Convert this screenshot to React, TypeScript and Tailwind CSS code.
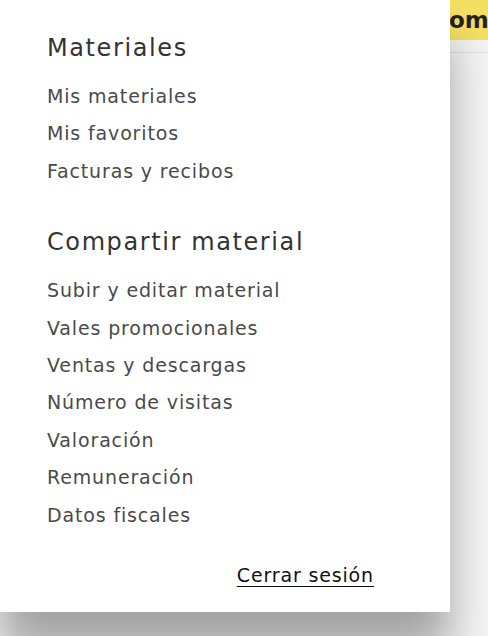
import React from "react";

const font = { fontFamily: '"DejaVu Sans", "Liberation Sans", sans-serif' };

type Section = {
  title: string;
  items: string[];
};

const sections: Section[] = [
  {
    title: "Materiales",
    items: ["Mis materiales", "Mis favoritos", "Facturas y recibos"],
  },
  {
    title: "Compartir material",
    items: [
      "Subir y editar material",
      "Vales promocionales",
      "Ventas y descargas",
      "Número de visitas",
      "Valoración",
      "Remuneración",
      "Datos fiscales",
    ],
  },
];

export default function App() {
  return (
    <div className="relative h-[636px] w-[488px] overflow-hidden bg-white" style={font}>
      {/* page behind the menu */}
      <header className="flex h-[53px] justify-end border-b border-[#dcdcdc] bg-[#f3f3f3]">
        <div className="flex h-[40px] w-[40px] items-center overflow-hidden whitespace-nowrap bg-[#f5df63] pl-[1px] text-[23px] font-bold text-[#222]">
          om
        </div>
      </header>
      <main className="h-full bg-[#f4f4f4]" />

      {/* user menu */}
      <nav className="absolute left-0 top-0 z-10 flex h-[612px] w-[450px] flex-col bg-white pl-[47px] shadow-[0_40px_40px_rgba(0,0,0,0.33)]">
        {sections.map((s, i) => (
          <div key={s.title} className={i === 0 ? "mt-[32px]" : "mt-[36px]"}>
            <h3 className="h-[32px] text-[24px] font-normal leading-[32px] tracking-[1.6px] text-[#333]">
              {s.title}
            </h3>
            <ul className="mt-[14px]">
              {s.items.map((it) => (
                <li
                  key={it}
                  className="h-[37.4px] text-[19px] leading-[37.4px] tracking-[0.85px] text-[#4a4a4a]"
                >
                  {it}
                </li>
              ))}
            </ul>
          </div>
        ))}
        <div className="mt-[23px] flex justify-end pr-[76px]">
          <a
            href="#"
            className="text-[19px] leading-[37px] tracking-[0.85px] text-[#111] underline underline-offset-[4px]"
          >
            Cerrar sesión
          </a>
        </div>
      </nav>
    </div>
  );
}
